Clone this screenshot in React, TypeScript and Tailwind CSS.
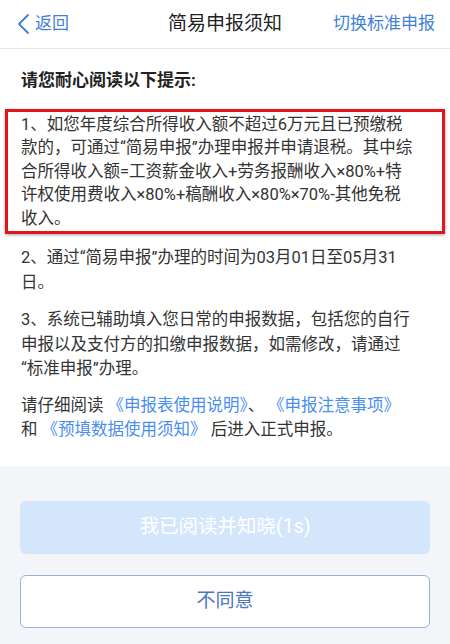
import React from "react";

const font = { fontFamily: "Roboto, 'Noto Sans CJK SC', sans-serif" };

function Header() {
  return (
    <div className="relative flex h-[49px] items-center border-b border-[#e6e6e6] bg-white">
      <button type="button" className="flex items-center pl-[16px] text-[17px] text-[#3f7fd6]">
        <svg width="16" height="22" viewBox="0 0 16 22" className="mr-[3px]">
          <path d="M12 2 L3 11 L12 20" fill="none" stroke="#3f7fd6" strokeWidth="1.8" strokeLinecap="round" strokeLinejoin="round" />
        </svg>
        返回
      </button>
      <div className="absolute left-1/2 -translate-x-1/2 text-[19px] text-[#222]">简易申报须知</div>
      <button type="button" className="ml-auto pr-[15px] text-[17px] text-[#3f7fd6]">
        切换标准申报
      </button>
    </div>
  );
}

export default function App() {
  return (
    <div className="flex min-h-[644px] w-[450px] flex-col bg-[#f4f5f9]" style={font}>
      <Header />
      <div className="bg-white px-[21px] pb-[23px] pt-[19px] text-[16.5px] leading-[24.5px] text-[#333]">
        <p className="text-[17px] font-bold text-[#222]">请您耐心阅读以下提示:</p>
        <div className="-mx-[16px] mt-[16px] border-[3px] border-[#e0161b] px-[13px] py-[1px] shadow-[0_1px_3px_rgba(0,0,0,0.35)]">
          <p className="whitespace-nowrap leading-[23.5px]">
            1、如您年度综合所得收入额不超过6万元且已预缴税
            <br />
            款的，可通过“简易申报”办理申报并申请退税。其中综
            <br />
            合所得收入额=工资薪金收入+劳务报酬收入×80%+特
            <br />
            许权使用费收入×80%+稿酬收入×80%×70%-其他免税
            <br />
            收入。
          </p>
        </div>
        <p className="mt-[12px] whitespace-nowrap">
          2、通过“简易申报”办理的时间为03月01日至05月31
          <br />
          日。
        </p>
        <p className="mt-[13px] whitespace-nowrap">
          3、系统已辅助填入您日常的申报数据，包括您的自行
          <br />
          申报以及支付方的扣缴申报数据，如需修改，请通过
          <br />
          “标准申报”办理。
        </p>
        <p className="mt-[12px] whitespace-nowrap">
          请仔细阅读 <a className="text-[#4a8ef0]">《申报表使用说明》</a>、
          <a className="ml-[12px] text-[#4a8ef0]">《申报注意事项》</a>
          <br />
          和 <a className="text-[#4a8ef0]">《预填数据使用须知》</a> 后进入正式申报。
        </p>
      </div>
      <div className="flex flex-col gap-[21px] px-[20px] pt-[35px]">
        <button type="button" className="h-[53px] rounded-[6px] bg-[#d3e6fb] text-[19.5px] text-white">
          我已阅读并知晓(1s)
        </button>
        <button type="button" className="h-[53px] rounded-[6px] border border-[#98b2d6] bg-white text-[19px] text-[#4a78c0]">
          不同意
        </button>
      </div>
    </div>
  );
}
